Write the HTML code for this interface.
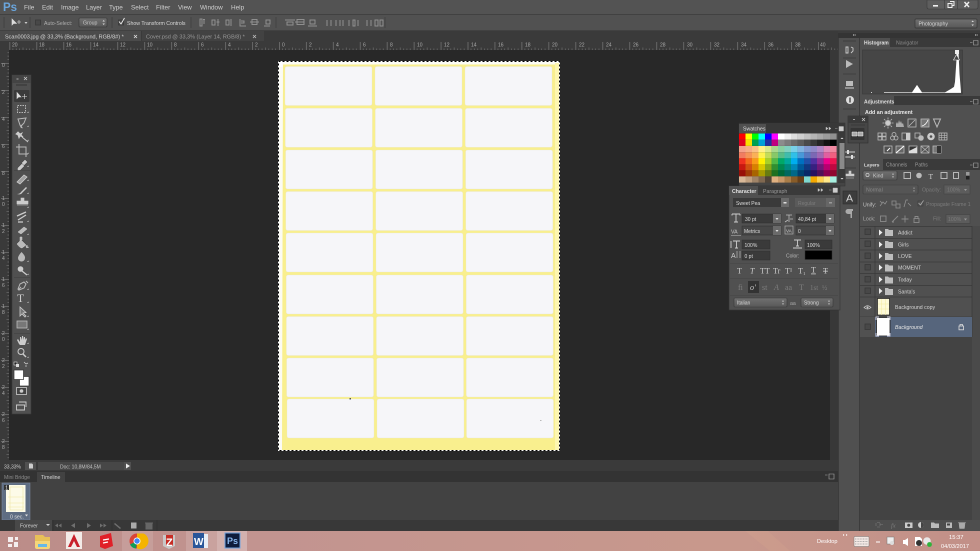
<!DOCTYPE html>
<html><head><meta charset="utf-8"><style>
html,body{margin:0;padding:0;background:#282828;overflow:hidden}
svg{display:block;filter:blur(.35px)}
text{font-family:"Liberation Sans",sans-serif;font-size:5.2px;fill:#cfcfcf}
.s rect{width:6.6px;height:6.2px}
.l rect{fill:#f6f6f9;width:87px;height:39px;rx:2px;stroke:#e6e6d4;stroke-width:.3}
.d{fill:#666;stroke:#2e2e2e;stroke-width:.6}
.f{fill:#3a3a3a;stroke:#2f2f2f;stroke-width:.5}
.i{fill:none;stroke:#b8b8b8;stroke-width:1}
.row{fill:none;stroke:#3a3a3a;stroke-width:.7}
.ck{fill:#484848;stroke:#393939;stroke-width:.8}
.dim{fill:#7c7c7c}
</style></head><body>
<svg width="980" height="551" viewBox="0 0 980 551" xmlns="http://www.w3.org/2000/svg">
<defs>
<pattern id="hr" x="279" y="41" width="26.95" height="9" patternUnits="userSpaceOnUse"><rect width="26.95" height="9" fill="#3a3a3a"/><rect x="0" y="1" width=".7" height="8" fill="#777"/><path d="M3.4 7.500v1.500M6.700 7.500v1.500M10 7.500v1.500M13.500 6.500v2.500M16.800 7.500v1.500M20.100 7.500v1.500M23.500 7.500v1.500" stroke="#808080" stroke-width=".5"/></pattern>
<pattern id="vr" x="0" y="63" width="9" height="27" patternUnits="userSpaceOnUse"><rect width="9" height="27" fill="#3a3a3a"/><rect x="1" y="0" width="8" height=".7" fill="#777"/><path d="M7.500 3.400h1.500M7.500 6.700h1.500M7.500 10h1.500M6.500 13.500h2.500M7.500 16.800h1.500M7.500 20.100h1.500M7.500 23.500h1.500" stroke="#808080" stroke-width=".5"/></pattern>
<linearGradient id="tb" x1="0" x2="1" y1="0" y2="0"><stop offset="0" stop-color="#bb8c88"/><stop offset=".25" stop-color="#c29490"/><stop offset=".75" stop-color="#c8988c"/><stop offset="1" stop-color="#c29088"/></linearGradient>
<linearGradient id="dd" x1="0" x2="0" y1="0" y2="1"><stop offset="0" stop-color="#707070"/><stop offset="1" stop-color="#585858"/></linearGradient>
</defs>

<!-- base chrome -->
<rect width="980" height="551" fill="#282828"/>
<rect width="980" height="14" fill="#535353"/>
<rect y="14" width="980" height="17" fill="#515151"/>
<path d="M0 14.500H980M0 30.500H980" stroke="#3d3d3d" stroke-width=".8"/>
<rect y="31" width="838" height="10" fill="#3a3a3a"/>
<rect y="31" width="141" height="10" fill="#4b4b4b"/>
<rect x="142" y="31" width="122" height="10" fill="#424242"/>
<rect y="41" width="838" height="9" fill="url(#hr)"/>
<rect y="50" width="9" height="410" fill="url(#vr)"/>
<rect y="41" width="9" height="9" fill="#3a3a3a"/>
<rect x="830" y="50" width="9" height="421" fill="#383838"/>

<!-- dock and right panels base -->
<rect x="838" y="31" width="142" height="500" fill="#3c3c3c"/>
<rect x="839" y="38" width="20" height="493" fill="#505050"/>
<rect x="860" y="47" width="120" height="484" fill="#505050"/>

<!-- ruler numbers -->
<g>
<text x="12" y="46.500" style="fill:#aaa;font-size:5px">20</text><text x="39" y="46.500" style="fill:#aaa;font-size:5px">18</text><text x="66" y="46.500" style="fill:#aaa;font-size:5px">16</text><text x="93" y="46.500" style="fill:#aaa;font-size:5px">14</text><text x="120" y="46.500" style="fill:#aaa;font-size:5px">12</text><text x="147" y="46.500" style="fill:#aaa;font-size:5px">10</text><text x="174" y="46.500" style="fill:#aaa;font-size:5px">8</text><text x="201" y="46.500" style="fill:#aaa;font-size:5px">6</text><text x="228" y="46.500" style="fill:#aaa;font-size:5px">4</text><text x="255" y="46.500" style="fill:#aaa;font-size:5px">2</text><text x="282" y="46.500" style="fill:#aaa;font-size:5px">0</text><text x="309" y="46.500" style="fill:#aaa;font-size:5px">2</text><text x="336" y="46.500" style="fill:#aaa;font-size:5px">4</text><text x="363" y="46.500" style="fill:#aaa;font-size:5px">6</text><text x="390" y="46.500" style="fill:#aaa;font-size:5px">8</text><text x="417" y="46.500" style="fill:#aaa;font-size:5px">10</text><text x="444" y="46.500" style="fill:#aaa;font-size:5px">12</text><text x="471" y="46.500" style="fill:#aaa;font-size:5px">14</text><text x="498" y="46.500" style="fill:#aaa;font-size:5px">16</text><text x="525" y="46.500" style="fill:#aaa;font-size:5px">18</text><text x="552" y="46.500" style="fill:#aaa;font-size:5px">20</text><text x="579" y="46.500" style="fill:#aaa;font-size:5px">22</text><text x="606" y="46.500" style="fill:#aaa;font-size:5px">24</text><text x="633" y="46.500" style="fill:#aaa;font-size:5px">26</text><text x="660" y="46.500" style="fill:#aaa;font-size:5px">28</text><text x="687" y="46.500" style="fill:#aaa;font-size:5px">30</text><text x="714" y="46.500" style="fill:#aaa;font-size:5px">32</text><text x="741" y="46.500" style="fill:#aaa;font-size:5px">34</text><text x="768" y="46.500" style="fill:#aaa;font-size:5px">36</text><text x="795" y="46.500" style="fill:#aaa;font-size:5px">38</text><text x="820" y="46.500" style="fill:#aaa;font-size:5px">40</text>
<text x="2" y="67" style="fill:#aaa;font-size:5px">0</text><text x="2" y="94" style="fill:#aaa;font-size:5px">2</text><text x="2" y="121" style="fill:#aaa;font-size:5px">4</text><text x="2" y="148" style="fill:#aaa;font-size:5px">6</text><text x="2" y="175" style="fill:#aaa;font-size:5px">8</text>
<text x="2" y="200" style="fill:#aaa;font-size:5px">1</text><text x="2" y="206" style="fill:#aaa;font-size:5px">0</text><text x="2" y="227" style="fill:#aaa;font-size:5px">1</text><text x="2" y="233" style="fill:#aaa;font-size:5px">2</text><text x="2" y="254" style="fill:#aaa;font-size:5px">1</text><text x="2" y="260" style="fill:#aaa;font-size:5px">4</text><text x="2" y="281" style="fill:#aaa;font-size:5px">1</text><text x="2" y="287" style="fill:#aaa;font-size:5px">6</text><text x="2" y="308" style="fill:#aaa;font-size:5px">1</text><text x="2" y="314" style="fill:#aaa;font-size:5px">8</text><text x="2" y="335" style="fill:#aaa;font-size:5px">2</text><text x="2" y="341" style="fill:#aaa;font-size:5px">0</text><text x="2" y="362" style="fill:#aaa;font-size:5px">2</text><text x="2" y="368" style="fill:#aaa;font-size:5px">2</text><text x="2" y="389" style="fill:#aaa;font-size:5px">2</text><text x="2" y="395" style="fill:#aaa;font-size:5px">4</text><text x="2" y="416" style="fill:#aaa;font-size:5px">2</text><text x="2" y="422" style="fill:#aaa;font-size:5px">6</text><text x="2" y="443" style="fill:#aaa;font-size:5px">2</text><text x="2" y="449" style="fill:#aaa;font-size:5px">8</text>
</g>

<!-- menu -->
<text x="3" y="11" style="font-size:11.500px;font-weight:bold;fill:#6aa5dc">Ps</text>
<g><text x="24" y="9.500" style="font-size:6.400px">File</text><text x="42" y="9.500" style="font-size:6.400px">Edit</text><text x="61" y="9.500" style="font-size:6.400px">Image</text><text x="86" y="9.500" style="font-size:6.400px">Layer</text><text x="109" y="9.500" style="font-size:6.400px">Type</text><text x="131" y="9.500" style="font-size:6.400px">Select</text><text x="156" y="9.500" style="font-size:6.400px">Filter</text><text x="178" y="9.500" style="font-size:6.400px">View</text><text x="200" y="9.500" style="font-size:6.400px">Window</text><text x="231" y="9.500" style="font-size:6.400px">Help</text></g>
<!-- window buttons -->
<path d="M927 0h51v7q0 2-2 2h-47q-2 0-2-2z" fill="#5e5e5e" stroke="#3c3c3c" stroke-width=".6"/>
<path d="M944.500 0V9M957.500 0V9" stroke="#3c3c3c" stroke-width=".6"/>
<rect x="933" y="5" width="5" height="1.600" fill="#eee"/>
<path d="M948 3.500h4v4h-4zM950 1.500h4v4h-1.500" fill="none" stroke="#eee" stroke-width="1"/>
<path d="M964.500 2l4.500 5M969 2l-4.500 5" stroke="#eee" stroke-width="1.400"/>

<!-- options bar -->
<path d="M4 17v11" stroke="#3c3c3c" stroke-width=".7"/>
<path d="M12 19l0 6 1.500-1.500 3 0zM17 22h4M19 20v4" fill="#ddd" stroke="#ddd" stroke-width=".6"/>
<path d="M24.500 22h3l-1.500 2z" fill="#ccc"/>
<path d="M30 17v11" stroke="#3c3c3c" stroke-width=".7"/>
<rect class="ck" x="35.500" y="20" width="5" height="5"/>
<text x="44" y="24.800" style="fill:#b0b0b0">Auto-Select:</text>
<rect x="79" y="18" width="28" height="9" rx="1" fill="url(#dd)" stroke="#353535" stroke-width=".6"/>
<text x="83" y="24.500" style="fill:#c8c8c8">Group</text>
<path d="M102.500 21.500l1.200-1.500 1.200 1.500zM102.500 23.500l1.200 1.500 1.200-1.500z" fill="#ddd"/>
<path d="M112 17v11" stroke="#3c3c3c" stroke-width=".7"/>
<rect class="ck" x="118.500" y="20" width="5" height="5"/>
<path d="M119 21.500l2 2.500 3.500-6" fill="none" stroke="#eee" stroke-width=".9"/>
<text x="127" y="24.800" style="fill:#d8d8d8">Show Transform Controls</text>
<path d="M191 17v11M276 17v11M385 17v11" stroke="#3c3c3c" stroke-width=".7"/>
<g fill="none" stroke="#8f8f8f" stroke-width="1">
<path d="M200 19v7h2v-7zM204 20v4M203 19.500h2"/><path d="M212 20v5h3v-5zM218 19v7M216.500 22h3"/><path d="M226 20v5h3v-5zM231 19v7"/>
<path d="M240 19v7h6M241 21h3v2h-3"/><path d="M250 22h9M252 19.500h5v5h-5z"/><path d="M270 26h-6M266 20h4v4h-4z"/>
<path d="M285 20h10M287 22h6v3h-6z"/><path d="M295 22h9M297 19.500h7v5h-7z"/><path d="M308 26h9M310 20h5v4h-5z"/>
<path d="M327 20v6M331 20v6M336 20v6M340 20v6"/><path d="M343 20v6M349 20v6"/><path d="M353 20h2v6h-2zM358 20v6"/><path d="M367 20v6M371 20v6"/><path d="M375 20h3v6h-3zM380 20v6h3v-6z"/>
</g>
<rect x="915" y="19" width="62" height="9" rx="1" fill="url(#dd)" stroke="#363636" stroke-width=".7"/>
<text x="918.500" y="25.500" style="fill:#d8d8d8">Photography</text>
<path d="M971.500 22l1.200-1.500 1.200 1.500zM971.500 24.500l1.200 1.500 1.200-1.500z" fill="#ddd"/>

<!-- tabs -->
<text x="5" y="38.500" style="fill:#d8d8d8;font-size:5.500px">Scan0003.jpg @ 33,3% (Background, RGB/8#) *</text>
<path d="M134 35l3 3M137 35l-3 3" stroke="#ddd" stroke-width=".8"/>
<text x="146" y="38.500" style="fill:#9a9a9a;font-size:5.500px">Cover.psd @ 33,3% (Layer 14, RGB/8) *</text>
<path d="M253 35l3 3M256 35l-3 3" stroke="#bbb" stroke-width=".8"/>

<!-- document -->
<rect x="278.500" y="61.500" width="281" height="389" fill="#fbfbf4"/>
<path d="M283 64.500H556.500V450H282z" fill="#f9ef8e"/>
<rect x="555" y="63" width="4" height="387" fill="#fdf6b0"/>
<rect x="279" y="62" width="3.500" height="5" fill="#fff"/>
<g class="l">
<rect x="285" y="66.500"/><rect x="375" y="66.500"/><rect x="465" y="66.500"/>
<rect x="285.300" y="108.300"/><rect x="375.300" y="108.300"/><rect x="465.300" y="108.300"/>
<rect x="285.600" y="150"/><rect x="375.600" y="150"/><rect x="465.600" y="150"/>
<rect x="285.800" y="191.500"/><rect x="375.800" y="191.500"/><rect x="465.800" y="191.500"/>
<rect x="286" y="233"/><rect x="376" y="233"/><rect x="466" y="233"/>
<rect x="286.200" y="275"/><rect x="376.200" y="275"/><rect x="466.200" y="275"/>
<rect x="286.400" y="316.500"/><rect x="376.400" y="316.500"/><rect x="466.200" y="316.500"/>
<rect x="286.600" y="358"/><rect x="376.600" y="358"/><rect x="466.300" y="358"/>
<rect x="287" y="399"/><rect x="377" y="399"/><rect x="466.500" y="399"/>
</g>
<rect x="349.500" y="398" width="1.500" height="1.500" fill="#555"/>
<rect x="540" y="420" width="1.500" height=".8" fill="#aaa"/>
<rect x="278.500" y="61.500" width="281" height="389" fill="none" stroke="#fff" stroke-width="1"/>
<rect x="278.500" y="61.500" width="281" height="389" fill="none" stroke="#000" stroke-width="1" stroke-dasharray="2 2"/>

<!-- toolbar -->
<rect x="12" y="75" width="19" height="339" fill="#505050" stroke="#3a3a3a" stroke-width=".6"/>
<rect x="12" y="75" width="19" height="8" fill="#444"/>
<path d="M16.500 79h2M24 77l3 3M27 77l-3 3" stroke="#ccc" stroke-width=".7"/>
<path d="M16 85h11" stroke="#343434" stroke-width="1"/>
<rect x="14" y="90" width="15.500" height="12" rx="1" fill="#3a3a3a"/>
<path d="M17 92.500v6l1.500-1.500h2.500zM22 96.500h5M24.500 94v5" fill="#ddd" stroke="#ddd" stroke-width=".6"/>
<rect class="i" x="17.500" y="105.500" width="8" height="7" stroke-dasharray="1.500 1"/>
<path class="i" d="M18 119l8-1-2 5-2 2-1 2-1-2zM21.500 125q-1 2 1 3"/>
<path d="M18 132l2 2 2-1-1 2 2 2-3-1-1 2-1-3-2-1zM22 137l6 5" fill="#ccc" stroke="#ccc" stroke-width=".9"/>
<path class="i" d="M19 144v10h9M16 147h10v10" stroke-width="1.300"/>
<path d="M18 168l4-4 2 2-4 4-2 .5zM22 163l3-3 2 2-3 3z" fill="#ccc" stroke="#ccc" stroke-width=".5"/>
<path d="M14 170.500h16" stroke="#444" stroke-width=".7"/>
<path d="M17 182l7-7 3 2-7 7z" fill="#a0a0a0" stroke="#ccc" stroke-width=".8"/>
<path d="M17 194q3 0 4-2l5-5 1 1-5 5q-1 2-5 1z" fill="#ccc"/>
<path d="M21 198h3v3h4v3h-11v-3h4zM17 205h11" fill="#ccc" stroke="#ccc" stroke-width=".6"/>
<path d="M17 216l9-4M18 220l8-5M18 222h5" stroke="#ccc" stroke-width="1.300" fill="none"/>
<path d="M18 232l6-5 3 2-6 5z" fill="#bbb" stroke="#ccc" stroke-width=".5"/>
<path d="M17 244l4-4 5 5-4 3q-2 0-5-4zM20 241v-4h2v3M27 245q1 2 0 3-2-1 0-3z" fill="#bbb" stroke="#ccc" stroke-width=".5"/>
<path d="M21.500 252q4 4 3.500 6a3.500 3.500 0 0 1-7 0q0-2 3.500-6z" fill="#bbb"/>
<circle cx="20.500" cy="269" r="2.800" fill="#ccc"/><path d="M22 271l5 4" stroke="#ccc" stroke-width="1.200"/>
<path d="M14 277.500h16" stroke="#444" stroke-width=".7"/>
<path class="i" d="M18 289l2-5 4-2 2 2-2 4-5 2zM26 281l2 2M18 290l3-3"/>
<text x="17" y="302" style="font-family:'Liberation Serif',serif;font-size:11.500px;fill:#ccc">T</text>
<path d="M20 307v9l2-2 3 3 1-1-3-3 3-.5z" fill="#777" stroke="#ccc" stroke-width=".8"/>
<rect x="17" y="321" width="10" height="7" fill="#777" stroke="#bbb" stroke-width=".8"/>
<path d="M14 333.500h16" stroke="#444" stroke-width=".7"/>
<path d="M17 340l2 4 1 1h5l2-6-1-1-1 2v-3h-1v3l-1-4h-1v4l-1-3h-1v5l-2-3z" fill="#ccc"/>
<circle cx="21" cy="351.500" r="3" fill="none" stroke="#ccc" stroke-width="1"/><path d="M23 354l3 3" stroke="#ccc" stroke-width="1.400"/>
<path d="M27 113h1.500v-1.500zM27 127h1.500v-1.500zM27 141h1.500v-1.500zM27 154h1.500v-1.500zM27 167h1.500v-1.500zM27 181h1.500v-1.500zM27 194h1.500v-1.500zM27 208h1.500v-1.500zM27 222h1.500v-1.500zM27 235h1.500v-1.500zM27 248h1.500v-1.500zM27 262h1.500v-1.500zM27 275h1.500v-1.500zM27 290h1.500v-1.500zM27 303h1.500v-1.500zM27 317h1.500v-1.500zM27 330h1.500v-1.500zM27 344h1.500v-1.500zM27 358h1.500v-1.500z" fill="#ccc"/>
<rect x="14" y="362" width="3" height="3" fill="#222" stroke="#ddd" stroke-width=".6"/><rect x="16" y="364" width="3" height="3" fill="#ddd"/>
<path d="M24 362l2 2M26 364l2-1M25 366h2" stroke="#ccc" stroke-width=".8"/>
<rect x="19.500" y="376.500" width="9.500" height="9.500" fill="#fff" stroke="#333" stroke-width=".7"/>
<rect x="14" y="370" width="9.500" height="9.500" fill="#fff" stroke="#333" stroke-width=".7"/>
<rect x="16.500" y="387.500" width="10" height="7" fill="#444" stroke="#ccc" stroke-width=".8"/><circle cx="21.500" cy="391" r="1.800" fill="#ccc"/>
<path d="M19 402h7v5M16.500 405h8v5h-8z" fill="#505050" stroke="#ccc" stroke-width=".9"/>

<!-- status -->
<rect y="460" width="838" height="11" fill="#3a3a3a"/>
<text x="4" y="468.300" style="fill:#d0d0d0;font-size:5px">33,33%</text>
<rect x="25" y="462" width="11" height="8" fill="#505050"/>
<path d="M29 463.500h3l1 1v4h-4z" fill="#ccc"/>
<rect x="38" y="462" width="86" height="8" fill="#474747"/>
<text x="60" y="468.300" style="fill:#c0c0c0;font-size:5px">Doc: 10,8M/84,5M</text>
<rect x="124" y="462" width="7" height="8" fill="#505050"/>
<path d="M126 463.500l4 2.500-4 2.500z" fill="#eee"/>

<!-- bottom panel -->
<rect y="471" width="838" height="60" fill="#424242"/>
<rect y="471" width="838" height="11" fill="#333"/>
<rect x="37" y="472" width="28" height="10" fill="#424242"/>
<text x="4" y="479" style="fill:#8c8c8c">Mini Bridge</text>
<text x="41" y="479" style="fill:#d5d5d5">Timeline</text>
<path d="M825 475h2.500M829 474h5v5h-5z" fill="none" stroke="#aaa" stroke-width=".6"/>
<rect x="2" y="483" width="28" height="37" fill="#5f6d82" stroke="#7f8ba0" stroke-width=".5"/>
<rect x="6" y="485" width="19.500" height="27" fill="#fdfbe8"/>
<path d="M10 487h13v23H10z" fill="none" stroke="#e8e09a" stroke-width=".5"/><path d="M8 497h16M8 503h16M8 507h16" stroke="#efe7a0" stroke-width=".6"/>
<rect x="4" y="485" width="5" height="5" fill="#333"/><text x="5.200" y="489.500" style="font-size:5px;fill:#fff">1</text>
<text x="10" y="518.500" style="fill:#ddd">0 sec.</text>
<path d="M25 514.500h3l-1.500 2z" fill="#ddd"/>
<rect y="520" width="838" height="11" fill="#383838"/>
<rect x="15" y="520" width="37" height="11" fill="#484848"/>
<text x="20" y="527.500" style="fill:#cfcfcf">Forever</text>
<path d="M46 524h4l-2 2z" fill="#ccc"/>
<path d="M53 520v11M112 520v11M157 520v11" stroke="#2c2c2c" stroke-width=".5"/>
<g fill="#6f6f6f"><path d="M55 525.500l3-2v4zM58.500 525.500l3-2v4zM71 525.500l4-2.500v5zM87 523l4 2.500-4 2.500zM100 523.500l3 2-3 2zM103.500 523.500l3 2-3 2z"/><path d="M115 523l6 5-1 1-6-5z"/></g>
<rect x="131" y="522.500" width="5.500" height="6" fill="#aaa"/>
<path d="M146 524h6v5h-6zM145 523h8" stroke="#666" fill="#666"/>

<!-- dock -->
<rect x="838" y="33" width="142" height="5" fill="#343434"/>
<path d="M853 35h3M975 35h3" stroke="#bbb" stroke-width="1.200" stroke-dasharray="1 .6"/>
<path d="M843 41h13" stroke="#3a3a3a" stroke-width=".8"/>
<path d="M846 47h2v6h-2zM851 47l2 1v3l-2 2" fill="none" stroke="#ccc" stroke-width=".9"/>
<path d="M843 58h13M843 74h13M843 109h13" stroke="#3a3a3a" stroke-width=".8"/>
<path d="M846 60v8l7-4z" fill="#bbb"/>
<rect x="846" y="81" width="7" height="5" fill="#bbb"/><path d="M845 88h9" stroke="#bbb" stroke-width="1.200"/>
<circle cx="850" cy="100" r="4" fill="#ddd"/><rect x="849.300" y="97.500" width="1.400" height="5" fill="#444"/>
<path d="M845 152h10M845 157h10" stroke="#ccc"/><rect x="847" y="150" width="2" height="4" fill="#ddd"/><rect x="851" y="155" width="2" height="4" fill="#ddd"/>
<path d="M843 168h13" stroke="#3a3a3a" stroke-width=".8"/>
<path d="M849 171h2v3h3v2h-8v-2h3zM846 178h8" stroke="#ccc" fill="#ccc" stroke-width=".6"/>
<rect x="843" y="191" width="14" height="13" fill="#3d3d3d" stroke="#2e2e2e" stroke-width=".6"/>
<text x="846" y="201.500" style="font-size:10.500px;fill:#ddd">A</text>
<path d="M848 209h5v2h-1v7h-1.500v-4h-2.500a2.500 2.500 0 0 1 0-5z" fill="#aaa"/>

<!-- histogram -->
<rect x="860" y="38" width="120" height="9" fill="#3a3a3a"/>
<rect x="860" y="38" width="30" height="9" fill="#505050"/>
<text x="864" y="44.500" style="fill:#e0e0e0;font-weight:bold;font-size:5px">Histogram</text>
<text x="896" y="44.500" style="fill:#8a8a8a">Navigator</text>
<path d="M970 42.500h2.500M973.500 40.500h4.500v4.500h-4.500z" stroke="#aaa" stroke-width=".6" fill="none"/>
<rect x="862.500" y="50" width="100" height="44" fill="#464646" stroke="#3a3a3a" stroke-width=".6"/>
<path d="M871 93v-.8h1v.8zM884 93v-.6h28l5-7.500 5 7.500h23l6-3.500 3-2 1-5 2-30 1.500 0 1 22 1.500 18v1z" fill="#fff"/>
<rect x="955" y="50" width="4" height="4" fill="#eee"/>
<path d="M956.500 54.500l3 5.500h-6z" fill="#444" stroke="#eee" stroke-width=".6"/>

<!-- adjustments -->
<rect x="860" y="96" width="120" height="9" fill="#3a3a3a"/>
<rect x="860" y="96" width="34" height="10" fill="#505050"/>
<text x="864" y="103.500" style="fill:#ddd;font-weight:bold;font-size:5px">Adjustments</text>
<path d="M970 101.500h2.500M973.500 99.500h4.500v4.500h-4.500z" stroke="#aaa" stroke-width=".6" fill="none"/>
<text x="865" y="114" style="fill:#e8e8e8;font-weight:bold;font-size:5.300px">Add an adjustment</text>
<g class="i">
<circle cx="888" cy="123" r="2.500" fill="#ccc"/><path d="M888 117.500v2M888 126.500v2M882.500 123h2M891.500 123h2M884 119l1.500 1.500M890.500 125.500l1.500 1.500M892 119l-1.500 1.500M885.500 125.500l-1.500 1.500" stroke-width=".8"/>
<path d="M896 127v-3l1-2 1 2 1-4 1 3 1-2 1 3 1-1 1 4z" fill="#aaa" stroke="none"/>
<rect x="908" y="119" width="8" height="8" stroke-width=".8"/><path d="M909 126l6-6" stroke-width=".8"/>
<rect x="921" y="119" width="8" height="8" fill="#777" stroke-width=".8"/><path d="M922 126q4-1 6-6" stroke="#fff" stroke-width=".8"/>
<path d="M933.500 119h7l-3.500 8z" stroke-width="1"/>
<rect x="878" y="133" width="8" height="7" stroke-width=".8"/><path d="M878 136.500h8M882 133v7" stroke-width="1.500"/>
<circle cx="892.500" cy="138" r="2" stroke-width=".8"/><circle cx="896" cy="138" r="2" stroke-width=".8"/><circle cx="894" cy="134.500" r="2" stroke-width=".8"/>
<rect x="902" y="133" width="8" height="7" stroke-width=".8"/><rect x="906" y="133" width="4" height="7" fill="#ccc" stroke="none"/>
<rect x="915" y="133" width="5" height="5" stroke-width=".8"/><circle cx="921" cy="138" r="2.500" fill="#bbb" stroke-width=".6"/>
<circle cx="931" cy="136.500" r="3.800" fill="#ccc" stroke="none"/><circle cx="931" cy="136.500" r="1.300" fill="#505050" stroke="none"/>
<rect x="939" y="133" width="8" height="7" stroke-width=".8"/><path d="M939 135.300h8M939 137.600h8M941.700 133v7M944.300 133v7" stroke-width=".6"/>
<rect x="884" y="146" width="8" height="7" stroke-width=".8"/><path d="M887 151l3-3" stroke="#fff"/>
<rect x="896" y="146" width="8" height="7" stroke-width=".8" fill="#666"/><path d="M896 153l8-7" stroke="#fff"/>
<rect x="909" y="146" width="8" height="7" stroke-width=".8" fill="#333"/><path d="M909 151l8-4v6h-8z" fill="#ddd" stroke="none"/>
<rect x="921" y="146" width="8" height="7" stroke-width=".8" fill="#555"/><path d="M921 146l8 7M929 146l-8 7" stroke-width=".7"/>
<rect x="933" y="146" width="8" height="7" stroke-width=".8" fill="#777"/><rect x="937" y="146" width="4" height="7" fill="#333" stroke="none"/>
</g>

<!-- layers panel -->
<rect x="860" y="159" width="120" height="11" fill="#3a3a3a"/>
<rect x="860" y="159" width="23" height="11" fill="#505050"/>
<text x="864" y="166.500" style="fill:#e0e0e0;font-weight:bold;font-size:4.800px">Layers</text>
<text x="886" y="166.500" style="fill:#9a9a9a;font-size:5px">Channels</text>
<text x="915" y="166.500" style="fill:#9a9a9a;font-size:5px">Paths</text>
<path d="M970 165h2.500M973.500 163h4.500v4.500h-4.500z" stroke="#aaa" stroke-width=".6" fill="none"/>
<rect x="863" y="171" width="34" height="9" rx="1" fill="url(#dd)" stroke="#3a3a3a" stroke-width=".6"/>
<circle cx="867.500" cy="175" r="1.600" fill="none" stroke="#ccc" stroke-width=".7"/>
<text x="873" y="177.500" style="fill:#ccc">Kind</text>
<path d="M892 174.500l1-1.300 1 1.300zM892 176.500l1 1.300 1-1.300z" fill="#ddd"/>
<rect x="904" y="172.500" width="6.500" height="6" class="i" stroke-width=".7"/>
<circle cx="919" cy="175.500" r="2.800" fill="#bbb"/>
<text x="928.500" y="179" style="font-family:'Liberation Serif',serif;font-size:7.500px">T</text>
<rect x="941" y="172.500" width="6" height="6" class="i" stroke-width=".8"/>
<rect x="953.500" y="172.500" width="5" height="6" class="i" stroke-width=".8"/>
<rect x="966" y="172" width="3.500" height="3.500" fill="#999"/><rect x="966" y="176" width="3.500" height="3.500" fill="#222"/>
<rect x="863" y="185" width="55" height="9" rx="1" fill="#555" stroke="#3f3f3f" stroke-width=".6"/>
<text x="866" y="191.500" style="fill:#8a8a8a">Normal</text>
<path d="M913 188.500l1-1.300 1 1.300zM913 190.500l1 1.300 1-1.300z" fill="#aaa"/>
<text x="922" y="191.500" class="dim">Opacity:</text>
<rect x="944" y="185" width="26" height="9" fill="#5c5c5c" stroke="#444" stroke-width=".6"/><text x="947" y="191.500" style="fill:#7c7c7c">100%</text>
<path d="M964 189h3l-1.500 2z" fill="#999"/>
<text x="863" y="206.500" style="fill:#c6c6c6">Unify:</text>
<path d="M880 206l3-4 2 2 2-3M880 201l2 2M892 201h4v4h-4zM896 204h4v4h-4zM904 207l2-7h2M908 203l3 3" fill="none" stroke="#8f8f8f" stroke-width=".8"/>
<rect x="918" y="201" width="5" height="5" fill="#555" stroke="#3e3e3e" stroke-width=".7"/><path d="M918.500 203l2 2 3-4.500" fill="none" stroke="#aaa" stroke-width=".8"/>
<text x="926" y="206" class="dim">Propagate Frame 1</text>
<text x="863" y="220.500" style="fill:#b0b0b0">Lock:</text>
<g fill="none" stroke="#8a8a8a" stroke-width=".9"><rect x="880.500" y="216" width="5.500" height="5.500"/><path d="M892 222l6-6M892 222h2"/><path d="M905 215.500v7M901.500 219h7"/><rect x="914" y="218.500" width="5" height="4"/><path d="M915 218.500v-2h3v2"/></g>
<text x="933" y="220.500" class="dim">Fill:</text>
<rect x="946" y="214.500" width="24" height="9" fill="#5c5c5c" stroke="#444" stroke-width=".6"/><text x="948" y="221" style="fill:#7c7c7c">100%</text>
<path d="M964 218.500h3l-1.500 2z" fill="#999"/>
<rect x="972" y="226" width="8" height="294" fill="#4a4a4a"/>
<rect x="860" y="337" width="112" height="183" fill="#434343"/>
<path d="M860 226.500H972M860 238.500H972M860 250H972M860 262H972M860 273.500H972M860 285.500H972M860 297H972M860 317H972M875 226V317M972 226V337" class="row"/>
<g class="ck"><rect x="865" y="229" width="5.500" height="5.500"/><rect x="865" y="241" width="5.500" height="5.500"/><rect x="865" y="253" width="5.500" height="5.500"/><rect x="865" y="264.500" width="5.500" height="5.500"/><rect x="865" y="276.500" width="5.500" height="5.500"/><rect x="865" y="288" width="5.500" height="5.500"/></g>
<path d="M879 229.500l3.500 3-3.500 3zM879 241.500l3.500 3-3.500 3zM879 253l3.500 3-3.500 3zM879 264.500l3.500 3-3.500 3zM879 276.500l3.500 3-3.500 3zM879 288l3.500 3-3.500 3z" fill="#ececec"/>
<path d="M885 229h3l1 1h4v6h-8zM885 241h3l1 1h4v6h-8zM885 253h3l1 1h4v6h-8zM885 264.500h3l1 1h4v6h-8zM885 276.500h3l1 1h4v6h-8zM885 288h3l1 1h4v6h-8z" fill="#bdbdbd"/>
<text x="898" y="234.500" style="fill:#d4d4d4">Addict</text><text x="898" y="246.500" style="fill:#d4d4d4">Girls</text><text x="898" y="258" style="fill:#d4d4d4">LOVE</text><text x="898" y="269.500" style="fill:#d4d4d4">MOMENT</text><text x="898" y="281.500" style="fill:#d4d4d4">Today</text><text x="898" y="293.500" style="fill:#d4d4d4">Santa's</text>
<path d="M864 307.500q3.500-3.500 7 0q-3.500 3-7 0z" fill="none" stroke="#ccc" stroke-width=".8"/><circle cx="867.500" cy="307.500" r="1" fill="#ccc"/>
<rect x="877.500" y="298.500" width="12" height="16.500" fill="#fdf9d8" stroke="#222" stroke-width=".7"/>
<path d="M881.500 299v16M885.500 299v16M878 304h11M878 309h11" stroke="#f3eba0" stroke-width=".5"/>
<text x="895" y="309" style="fill:#d4d4d4">Background copy</text>
<rect x="875" y="317" width="97" height="20" fill="#56657c"/>
<rect x="860" y="317" width="15" height="20" fill="#515151"/>
<rect class="ck" x="865" y="324" width="5.500" height="5.500"/>
<rect x="876.500" y="317.500" width="13.500" height="18.500" fill="#fff" stroke="#1f1f1f" stroke-width=".8"/>
<path d="M876 320v-3h3M887 317h3v3M876 333v3h3M887 336h3v-3" fill="none" stroke="#ccd" stroke-width=".9"/>
<text x="895" y="329" style="fill:#e4e4e4;font-style:italic">Background</text>
<rect x="959" y="326" width="4.500" height="3.800" fill="none" stroke="#ddd" stroke-width=".8"/><path d="M960 326v-1.500h2.500v1.500" fill="none" stroke="#ddd" stroke-width=".8"/>
<rect x="860" y="520" width="120" height="11" fill="#4e4e4e"/>
<path d="M877 522.500h3M877 527h3M876 523v3M880 523v3M880 524.500h3" fill="none" stroke="#7a7a7a" stroke-width=".6"/>
<text x="891" y="527.500" style="font-family:'Liberation Serif',serif;font-style:italic;font-size:6.400px;fill:#7c7c7c">fx</text>
<rect x="905" y="522.500" width="7.500" height="5.500" fill="#ccc"/><circle cx="908.700" cy="525.200" r="1.500" fill="#444"/>
<circle cx="921" cy="525" r="3" fill="#ccc"/><path d="M921 522a3 3 0 0 1 0 6z" fill="#444"/>
<path d="M931 522.500h3l1 1h4v4.500h-8z" fill="#bbb"/>
<path d="M946 522.500h6v5.500h-6z" fill="#bbb"/><rect x="947" y="523.500" width="3" height="2" fill="#444"/>
<path d="M959 523h6l-.6 5.500h-4.800zM958 522.500h8" fill="#aaa" stroke="#aaa" stroke-width=".5"/>

<!-- floating small panel -->
<rect x="848" y="116" width="20" height="27" fill="#464646" stroke="#2f2f2f" stroke-width=".6"/>
<rect x="848" y="116" width="20" height="7" fill="#3a3a3a"/>
<path d="M853 119.500h2M862 118l3 3M865 118l-3 3" stroke="#ccc" stroke-width=".7"/>
<path d="M851 125h14" stroke="#3a3a3a"/>
<rect x="850.500" y="128" width="14" height="12" rx="1" fill="#353535"/>
<path d="M852 132h5v4h-5zM858 132h5v4h-5z" fill="#aaa" stroke="#eee" stroke-width=".5"/>

<!-- swatches panel -->
<rect x="739" y="123" width="106" height="63" fill="#444" stroke="#333" stroke-width=".5"/>
<rect x="739" y="123" width="106" height="10" fill="#383838"/>
<rect x="739" y="124" width="27" height="9" fill="#505050"/>
<text x="743" y="130.300" style="fill:#ddd">Swatches</text>
<path d="M826 127l2 1.500-2 1.500zM829 127l2 1.500-2 1.500zM835 128.500h2.500M839 126.500h4.500v4.500h-4.500z" fill="#ccc" stroke="#bbb" stroke-width=".4"/>
<g class="s">
<rect x="739" y="133.500" fill="#f00"/><rect x="745.500" y="133.500" fill="#ff0"/><rect x="752" y="133.500" fill="#0f0"/><rect x="758.500" y="133.500" fill="#0ff"/><rect x="765" y="133.500" fill="#00f"/><rect x="771.600" y="133.500" fill="#f0f"/><rect x="778" y="133.500" fill="#fff"/><rect x="784.500" y="133.500" fill="#eee"/><rect x="791" y="133.500" fill="#ddd"/><rect x="797.600" y="133.500" fill="#d0d0d0"/><rect x="804" y="133.500" fill="#c2c2c2"/><rect x="810.500" y="133.500" fill="#b4b4b4"/><rect x="817" y="133.500" fill="#a8a8a8"/><rect x="823.600" y="133.500" fill="#9c9c9c"/><rect x="830" y="133.500" fill="#909090"/>
<rect x="739" y="139.700" fill="#e00020"/><rect x="745.500" y="139.700" fill="#f8e000"/><rect x="752" y="139.700" fill="#00a050"/><rect x="758.500" y="139.700" fill="#00a0d8"/><rect x="765" y="139.700" fill="#2030a0"/><rect x="771.600" y="139.700" fill="#c00080"/><rect x="778" y="139.700" fill="#8c8c8c"/><rect x="784.500" y="139.700" fill="#7c7c7c"/><rect x="791" y="139.700" fill="#6c6c6c"/><rect x="797.600" y="139.700" fill="#5c5c5c"/><rect x="804" y="139.700" fill="#4a4a4a"/><rect x="810.500" y="139.700" fill="#383838"/><rect x="817" y="139.700" fill="#262626"/><rect x="823.600" y="139.700" fill="#131313"/><rect x="830" y="139.700" fill="#000"/>
<rect x="739" y="146" fill="#f5a08a"/><rect x="745.500" y="146" fill="#f7ad85"/><rect x="752" y="146" fill="#fbc086"/><rect x="758.500" y="146" fill="#fff08a"/><rect x="765" y="146" fill="#d8e88a"/><rect x="771.600" y="146" fill="#a8d88c"/><rect x="778" y="146" fill="#88d0a0"/><rect x="784.500" y="146" fill="#80d0c0"/><rect x="791" y="146" fill="#78d0e8"/><rect x="797.600" y="146" fill="#80b4e0"/><rect x="804" y="146" fill="#8098d0"/><rect x="810.500" y="146" fill="#9088c8"/><rect x="817" y="146" fill="#b088c8"/><rect x="823.600" y="146" fill="#e088b8"/><rect x="830" y="146" fill="#f088a0"/>
<rect x="739" y="152.200" fill="#f17c60"/><rect x="745.500" y="152.200" fill="#f59458"/><rect x="752" y="152.200" fill="#fab058"/><rect x="758.500" y="152.200" fill="#fff250"/><rect x="765" y="152.200" fill="#c4dc58"/><rect x="771.600" y="152.200" fill="#88c868"/><rect x="778" y="152.200" fill="#58bc88"/><rect x="784.500" y="152.200" fill="#40bcac"/><rect x="791" y="152.200" fill="#30c0e8"/><rect x="797.600" y="152.200" fill="#4898d8"/><rect x="804" y="152.200" fill="#5878c0"/><rect x="810.500" y="152.200" fill="#7c68b4"/><rect x="817" y="152.200" fill="#a068b4"/><rect x="823.600" y="152.200" fill="#e060a0"/><rect x="830" y="152.200" fill="#f06080"/>
<rect x="739" y="158.200" fill="#ee3020"/><rect x="745.500" y="158.200" fill="#f26a1c"/><rect x="752" y="158.200" fill="#f89a18"/><rect x="758.500" y="158.200" fill="#fff200"/><rect x="765" y="158.200" fill="#a8d028"/><rect x="771.600" y="158.200" fill="#50b848"/><rect x="778" y="158.200" fill="#00a868"/><rect x="784.500" y="158.200" fill="#00a89c"/><rect x="791" y="158.200" fill="#00aeef"/><rect x="797.600" y="158.200" fill="#0070c0"/><rect x="804" y="158.200" fill="#2050a8"/><rect x="810.500" y="158.200" fill="#5030a0"/><rect x="817" y="158.200" fill="#902c98"/><rect x="823.600" y="158.200" fill="#ec008c"/><rect x="830" y="158.200" fill="#ee1450"/>
<rect x="739" y="164.200" fill="#c81810"/><rect x="745.500" y="164.200" fill="#d05010"/><rect x="752" y="164.200" fill="#d88000"/><rect x="758.500" y="164.200" fill="#d8c800"/><rect x="765" y="164.200" fill="#88a818"/><rect x="771.600" y="164.200" fill="#309030"/><rect x="778" y="164.200" fill="#008850"/><rect x="784.500" y="164.200" fill="#008880"/><rect x="791" y="164.200" fill="#0088b8"/><rect x="797.600" y="164.200" fill="#005898"/><rect x="804" y="164.200" fill="#103880"/><rect x="810.500" y="164.200" fill="#382080"/><rect x="817" y="164.200" fill="#701878"/><rect x="823.600" y="164.200" fill="#b80070"/><rect x="830" y="164.200" fill="#c00840"/>
<rect x="739" y="170.200" fill="#981008"/><rect x="745.500" y="170.200" fill="#a03c08"/><rect x="752" y="170.200" fill="#a86400"/><rect x="758.500" y="170.200" fill="#a89c00"/><rect x="765" y="170.200" fill="#687c10"/><rect x="771.600" y="170.200" fill="#207020"/><rect x="778" y="170.200" fill="#006838"/><rect x="784.500" y="170.200" fill="#006860"/><rect x="791" y="170.200" fill="#006888"/><rect x="797.600" y="170.200" fill="#004070"/><rect x="804" y="170.200" fill="#082868"/><rect x="810.500" y="170.200" fill="#281060"/><rect x="817" y="170.200" fill="#501058"/><rect x="823.600" y="170.200" fill="#880050"/><rect x="830" y="170.200" fill="#900830"/>
<rect x="739" y="176.400" fill="#d8b898"/><rect x="745.500" y="176.400" fill="#c0a080"/><rect x="752" y="176.400" fill="#a08468"/><rect x="758.500" y="176.400" fill="#806850"/><rect x="765" y="176.400" fill="#504438"/><rect x="771.600" y="176.400" fill="#e0b080"/><rect x="778" y="176.400" fill="#c89868"/><rect x="784.500" y="176.400" fill="#a87c48"/><rect x="791" y="176.400" fill="#885c28"/><rect x="797.600" y="176.400" fill="#684018"/><rect x="804" y="176.400" fill="#7fd9d0"/><rect x="810.500" y="176.400" fill="#f5a800"/><rect x="817" y="176.400" fill="#ffd050"/><rect x="823.600" y="176.400" fill="#ffe88a"/><rect x="830" y="176.400" fill="#a8f0e0"/>
</g>
<rect x="838" y="133" width="7" height="50" fill="#3a3a3a"/>
<rect x="839.500" y="143" width="5" height="26" fill="#8a8a8a"/>
<path d="M840.500 139l1.500-1.500 1.500 1.500z" fill="#ddd"/><path d="M840.500 178l1.500 1.500 1.500-1.500z" fill="#ddd"/>

<!-- character panel -->
<rect x="729" y="186" width="111" height="124" fill="#505050" stroke="#343434" stroke-width=".6"/>
<rect x="729" y="186" width="111" height="9" fill="#3a3a3a"/>
<rect x="729" y="186" width="29" height="9" fill="#505050"/>
<text x="732" y="192.800" style="fill:#e0e0e0;font-weight:bold">Character</text>
<text x="763" y="192.800" style="fill:#9a9a9a">Paragraph</text>
<path d="M818 188.500l2 1.500-2 1.500zM821 188.500l2 1.500-2 1.500zM829 190h2.500M833 188h4.500v4.500h-4.500z" fill="#ccc" stroke="#bbb" stroke-width=".4"/>
<rect x="733" y="198" width="56" height="9" fill="#3a3a3a"/><rect x="781" y="198" width="8" height="9" fill="#6a6a6a"/>
<text x="736" y="204.800" style="fill:#ddd;font-size:5px">Sweet Pea</text><path d="M783.500 202h3v1.500h-3z" fill="#ddd"/>
<rect x="795" y="198" width="40" height="9" fill="#5a5a5a"/><rect x="826" y="198" width="9" height="9" fill="#666"/>
<text x="798" y="204.800" class="dim" style="font-size:5px">Regular</text><path d="M829 202h3v1.500h-3z" fill="#999"/>
<path d="M732 214h8M736 214v8M734 222h4M732 214v1.500M740 214v1.500" fill="none" stroke="#ccc" stroke-width=".9"/>
<path d="M786 215h6M789 215v7M785 222l3-2M793 219h-3" fill="none" stroke="#bbb" stroke-width=".8"/>
<rect class="f" x="742" y="214" width="39" height="9"/><rect x="773" y="214" width="8" height="9" fill="#6a6a6a"/>
<text x="745" y="220.800" style="fill:#ddd;font-size:5px">30 pt</text><path d="M775.500 218h3l-1.500 2z" fill="#ddd"/>
<rect class="f" x="796" y="214" width="38" height="9"/><rect x="826" y="214" width="8" height="9" fill="#6a6a6a"/>
<text x="798" y="220.800" style="fill:#ddd;font-size:5px">40,84 pt</text><path d="M828.500 218h3l-1.500 2z" fill="#ddd"/>
<text x="731" y="233.500" style="fill:#c6c6c6">VA</text><path d="M731 235.500h10" stroke="#aaa" stroke-width=".6"/>
<rect class="f" x="742" y="226" width="39" height="9" style="fill:#474747"/><rect x="773" y="226" width="8" height="9" fill="#6a6a6a"/>
<text x="744" y="232.800" style="fill:#ddd;font-size:5px">Metrics</text><path d="M775.500 230h3l-1.500 2z" fill="#ddd"/>
<rect x="785" y="226" width="8" height="8" fill="none" stroke="#aaa" stroke-width=".7"/><text x="786" y="232.500" style="font-size:4.500px">VA</text>
<rect class="f" x="796" y="226" width="38" height="9" style="fill:#474747"/><rect x="826" y="226" width="8" height="9" fill="#6a6a6a"/>
<text x="798" y="232.800" style="fill:#ddd;font-size:5px">0</text><path d="M828.500 230h3l-1.500 2z" fill="#ddd"/>
<path d="M733 241h7M736.500 241v7M735 248h3M731 241v7" fill="none" stroke="#ccc" stroke-width=".9"/>
<rect class="f" x="742" y="240" width="28" height="9"/><text x="744.500" y="246.800" style="fill:#ddd;font-size:5px">100%</text>
<path d="M794 240h7M797.500 240v6M796 246h3M793 248h9" fill="none" stroke="#ccc" stroke-width=".9"/>
<rect class="f" x="805" y="240" width="27" height="9"/><text x="807" y="246.800" style="fill:#ddd;font-size:5px">100%</text>
<text x="731" y="258" style="font-size:7px;fill:#ccc">A</text><path d="M737 251v7M740 251v7" stroke="#aaa" stroke-width=".8"/>
<rect class="f" x="742" y="251" width="28" height="9"/><text x="744.500" y="257.800" style="fill:#ddd;font-size:5px">0 pt</text>
<text x="786" y="257.300" style="fill:#bbb;font-size:5px">Color:</text>
<rect x="805" y="250.500" width="27" height="9" fill="#000" stroke="#333" stroke-width=".5"/>
<path d="M730 263.500H838M730 278.500H838M730 295.500H838" stroke="#454545" stroke-width=".6"/>
<text x="737" y="273.500" style="font-family:'Liberation Serif',serif;font-size:8px;fill:#ccc">T</text>
<text x="750" y="273.500" style="font-family:'Liberation Serif',serif;font-size:8px;font-style:italic;fill:#ccc">T</text>
<text x="760" y="273.500" style="font-family:'Liberation Serif',serif;font-size:8px;fill:#ccc">TT</text>
<text x="773" y="273.500" style="font-family:'Liberation Serif',serif;font-size:8px;fill:#ccc">Tr</text>
<text x="785" y="273.500" style="font-family:'Liberation Serif',serif;font-size:8px;fill:#ccc">T¹</text>
<text x="798" y="273.500" style="font-family:'Liberation Serif',serif;font-size:8px;fill:#ccc">T₁</text>
<text x="811" y="272.500" style="font-family:'Liberation Serif',serif;font-size:8px;fill:#ccc;text-decoration:underline">T</text>
<text x="823" y="273.500" style="font-family:'Liberation Serif',serif;font-size:8px;fill:#ccc;text-decoration:line-through">T</text>
<rect x="748" y="281" width="11" height="12" fill="#333"/>
<text x="738" y="290" style="font-family:'Liberation Serif',serif;font-size:8px;fill:#7d7d7d">fi</text>
<text x="750" y="290" style="font-family:'Liberation Serif',serif;font-size:8px;font-style:italic;fill:#ccc">o'</text>
<text x="762" y="290" style="font-family:'Liberation Serif',serif;font-size:8px;fill:#7d7d7d">st</text>
<text x="774" y="290" style="font-family:'Liberation Serif',serif;font-size:8px;font-style:italic;fill:#7d7d7d">A</text>
<text x="785" y="290" style="font-family:'Liberation Serif',serif;font-size:8px;fill:#7d7d7d">aa</text>
<text x="799" y="290" style="font-family:'Liberation Serif',serif;font-size:8px;fill:#7d7d7d">T</text>
<text x="810" y="290" style="font-family:'Liberation Serif',serif;font-size:7px;fill:#7d7d7d">1st</text>
<text x="822" y="290" style="font-family:'Liberation Serif',serif;font-size:7px;fill:#7d7d7d">½</text>
<rect x="734" y="298" width="53" height="9" rx="1" fill="url(#dd)" stroke="#3a3a3a" stroke-width=".6"/>
<text x="737" y="304.600" style="fill:#ddd;font-size:5px">Italian</text><path d="M782 301.500l1-1.300 1 1.300zM782 303.500l1 1.300 1-1.300z" fill="#ddd"/>
<text x="790" y="305" style="fill:#aaa">aa</text>
<rect x="801" y="298" width="32" height="9" rx="1" fill="url(#dd)" stroke="#3a3a3a" stroke-width=".6"/>
<text x="804" y="304.600" style="fill:#ddd;font-size:5px">Strong</text><path d="M828 301.500l1-1.300 1 1.300zM828 303.500l1 1.300 1-1.300z" fill="#ddd"/>

<!-- taskbar -->
<rect y="531" width="980" height="20" fill="url(#tb)"/>
<rect x="122" y="531" width="31" height="20" fill="#fff" fill-opacity=".12"/>
<rect x="186" y="531" width="31" height="20" fill="#fff" fill-opacity=".14"/>
<rect x="217" y="531" width="30" height="20" fill="#fff" fill-opacity=".28"/>
<path d="M745 531l25 20h20l-22-20z" fill="#d8a890" fill-opacity=".25"/>
<path d="M8 537h5v5h-5zM15 537h3v3h-3zM8 544h4v3H8zM14 542h4v5h-4z" fill="#f4eeee"/>
<path d="M35 539h15v8q0 2-2 2H37q-2 0-2-2z" fill="#f4d67a"/><path d="M35 535h8l2 2h5v4H35z" fill="#e8c058"/><rect x="38" y="544" width="9" height="3" fill="#66b8e8"/>
<rect x="66" y="532" width="16" height="17" fill="#f3ebe8"/><path d="M74 534l-6 13h3l3-6 3 6h3z" fill="#c8202c"/>
<path d="M100 536l11-3 2 13-8 3-5-2z" fill="#e02028"/><path d="M103 540l6-1M103 543l5-1" stroke="#fff" stroke-width="1.200"/>
<circle cx="137" cy="541" r="7.500" fill="#db4437"/><path d="M137 541l-7 3.500a7.500 7.500 0 0 0 6 4z" fill="#0f9d58"/><path d="M137 533.500h6.500a7.500 7.500 0 0 1-6.500 15z" fill="#f4b400"/><circle cx="137" cy="541" r="3.500" fill="#fff"/><circle cx="137" cy="541" r="2.700" fill="#4285f4"/>
<path d="M163 535h12v11l-6 3-6-3z" fill="#c8c8c8"/><path d="M166 535h7v11h-7z" fill="#c72d25"/><text x="166" y="546" style="font-size:11px;font-weight:bold;fill:#fff">Z</text>
<rect x="193" y="534" width="15" height="14" fill="#e8eef6"/><rect x="193" y="533" width="11" height="15" fill="#2a5699"/><text x="194" y="545" style="font-size:10px;font-weight:bold;fill:#fff">W</text>
<rect x="225" y="533" width="15" height="15" fill="#0e1c3c" stroke="#6da2e0" stroke-width="1"/><text x="227" y="544" style="font-size:9px;font-weight:bold;fill:#8ab8ee">Ps</text>
<text x="817" y="543" style="fill:#fff;font-size:5.600px">Desktop</text>
<path d="M843 534l1.500 1-1.500 1zM846 534l1.500 1-1.500 1z" fill="#fff"/>
<rect x="854" y="536.500" width="15" height="10" rx="1" fill="#f3e8e4" stroke="#777" stroke-width=".5"/><path d="M855 539h13M855 541.500h13M855 544h13" stroke="#999" stroke-width=".7" stroke-dasharray="1 .6"/>
<path d="M876 542h4" stroke="#fff" stroke-width="1"/>
<rect x="887" y="537" width="7" height="7" fill="#eee" stroke="#777" stroke-width=".5"/><circle cx="892" cy="543" r="2" fill="#ddd"/>
<path d="M903 540h2l3-2v8l-3-2h-2z" fill="#fff"/>
<path d="M915 537h5l2 2v7h-7z" fill="#fff"/><circle cx="919" cy="543" r="3" fill="#333"/>
<circle cx="927" cy="541" r="3.800" fill="#e8e8e8"/><circle cx="929.500" cy="544.500" r="2.400" fill="#2fb33a"/>
<text x="949" y="539" style="fill:#fff;font-size:5.800px">15:37</text>
<text x="941" y="548" style="fill:#fff;font-size:5.600px">04/03/2017</text>
</svg>
</body></html>
